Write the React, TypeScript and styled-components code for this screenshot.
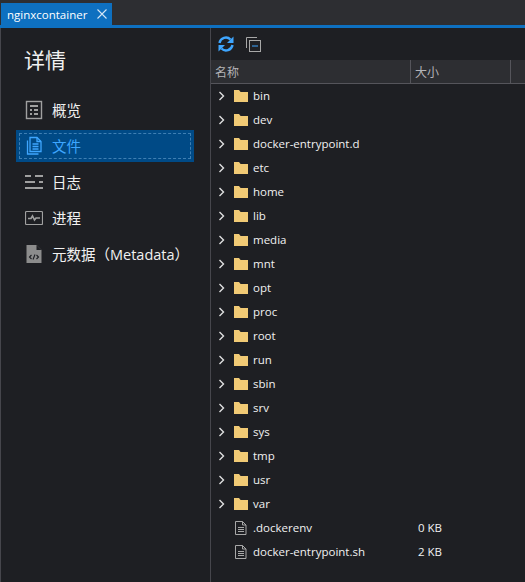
import React from 'react';
import styled, { createGlobalStyle } from 'styled-components';

const GlobalStyle = createGlobalStyle`
  html, body {
    margin: 0;
    padding: 0;
    background: #1e1f23;
  }
  * {
    box-sizing: border-box;
  }
`;

const Window = styled.div`
  width: 525px;
  height: 582px;
  display: flex;
  flex-direction: column;
  overflow: hidden;
  background: #1e1f23;
  color: #f1f1f1;
  font-family: 'Open Sans', 'Noto Sans CJK SC', sans-serif;
  font-size: 11.5px;
`;

const TabStrip = styled.div`
  height: 28px;
  flex: none;
  display: flex;
  align-items: flex-start;
  padding: 3px 0 0 1px;
  background: #2d2e32;
  box-shadow: inset 0 -3px 0 #0e70c0, inset 0 -1px 0 #46464c;
`;

const Tab = styled.div`
  width: 111px;
  height: 22px;
  display: flex;
  align-items: center;
  gap: 10px;
  padding-left: 6px;
  background: #0e70c0;
  color: #fff;
  font-size: 11.5px;
`;

const Body = styled.div`
  flex: 1;
  display: flex;
  min-height: 0;
  border-left: 1px solid #46464c;
`;

const Sidebar = styled.aside`
  width: 210px;
  flex: none;
  padding: 18px 16px 0 15px;
  border-right: 1px solid #46464c;
`;

const Title = styled.h1`
  margin: 0 0 20px 8px;
  height: 28px;
  font-size: 21px;
  line-height: 28px;
  font-weight: 400;
  color: #f1f1f1;
`;

const NavRow = styled.div<{ $active?: boolean }>`
  height: 32px;
  margin-bottom: 4px;
  width: 178px;
  display: flex;
  align-items: center;
  gap: 9px;
  padding-left: 9px;
  font-size: 14.5px;
  white-space: nowrap;
  color: ${p => (p.$active ? '#3ea6ff' : '#f1f1f1')};
  background: ${p => (p.$active ? '#004a86' : 'transparent')};
  outline: ${p => (p.$active ? '1px dashed #3f7fb3' : 'none')};
  outline-offset: -4px;
`;

const NavLabel = styled.span`
  padding-bottom: 2px;
`;

const NavIcon = styled.svg`
  width: 18px;
  height: 20px;
  flex: none;
`;

const Content = styled.main`
  flex: 1;
  min-width: 0;
  display: flex;
  flex-direction: column;
`;

const Toolbar = styled.div`
  height: 32px;
  flex: none;
  display: flex;
  align-items: center;
  gap: 11px;
  padding: 0 0 0 6px;
`;

const ColumnHeader = styled.div`
  height: 24px;
  flex: none;
  display: grid;
  grid-template-columns: 200px 100px 1fr;
  background: #2d2e32;
  border-bottom: 1px solid #55555b;
  color: #b4b4b8;
  font-size: 12px;
`;

const HeaderCell = styled.div`
  display: flex;
  align-items: center;
  padding-left: 4px;
  border-right: 1px solid #55555b;
`;

const Rows = styled.div`
  flex: 1;
`;

const Row = styled.div`
  height: 24px;
  display: grid;
  grid-template-columns: 200px 100px 1fr;
  align-items: center;
  color: #f1f1f1;
  font-size: 11.5px;
`;

const NameCell = styled.div`
  display: flex;
  align-items: center;
  padding-left: 7px;
  white-space: nowrap;
`;

const Chevron = styled.svg`
  width: 8px;
  height: 10px;
  flex: none;
  margin-right: 8px;
`;

const Spacer = styled.span`
  width: 8px;
  flex: none;
  margin-right: 8px;
`;

const FileName = styled.span`
  margin-left: 5px;
  padding-bottom: 2px;
`;

const SizeCell = styled.div`
  padding: 0 0 2px 7px;
`;

const FolderIcon = () => (
  <svg width="14" height="12" viewBox="0 0 14 12" style={{ flex: 'none' }}>
    <path d="M0 0h5l1.600 2H14v10H0z" fill="#f1ca75" />
  </svg>
);

const FileIcon = () => (
  <svg width="14" height="14" viewBox="0 0 14 14" style={{ flex: 'none' }} fill="none" stroke="#a8a8a8">
    <path d="M1.500.5h7l3.500 3.500v9.500H1.500z" />
    <path d="M8.500.5V4H12M4 6.500h6M4 8.500h6M4 10.500h6" />
  </svg>
);

const OverviewIcon = () => (
  <NavIcon viewBox="0 0 18 20" fill="none" stroke="#a0a0a0">
    <rect x="1.500" y="1.500" width="15" height="17" strokeWidth="1.400" />
    <path d="M5 6h8M5 10h2M9 10h4M5 14h2M9 14h4" strokeWidth="1.800" />
  </NavIcon>
);

const FilesIcon = () => (
  <NavIcon viewBox="0 0 18 20" fill="none" stroke="#3ea6ff" strokeWidth="1.300">
    <path d="M5 1.500h7l4 4V15.500H5z" />
    <path d="M12 1.500v4h4M2.500 4.500v13.500h11" />
    <path d="M7.500 8h6M7.500 10.500h6M7.500 13h6" />
  </NavIcon>
);

const LogsIcon = () => (
  <NavIcon viewBox="0 0 18 20" fill="none" stroke="#a0a0a0" strokeWidth="1.800">
    <path d="M0 4h6M10 4h8M0 10h10M14 10h4M0 16h18" />
  </NavIcon>
);

const ProcessIcon = () => (
  <NavIcon viewBox="0 0 18 20" fill="none" stroke="#a0a0a0">
    <rect x="0.500" y="3.500" width="17" height="13" rx="1" strokeWidth="1.200" />
    <path d="M3 10.500h3l1.500-2.500 2 4 1.500-2h4" strokeWidth="1.600" />
  </NavIcon>
);

const MetadataIcon = () => (
  <NavIcon viewBox="0 0 18 20">
    <path d="M1.500 1h10l5 5v13h-15z" fill="#8c8c8c" />
    <path d="M11.500 1v5h5" fill="#1e1f23" />
    <path d="M6.500 11l-2 2 2 2M11.500 11l2 2-2 2M10 10.500l-2 5" fill="none" stroke="#1e1f23" strokeWidth="1.100" />
  </NavIcon>
);

const navItems = [
  { label: '概览', icon: <OverviewIcon /> },
  { label: '文件', icon: <FilesIcon />, active: true },
  { label: '日志', icon: <LogsIcon /> },
  { label: '进程', icon: <ProcessIcon /> },
  { label: '元数据（Metadata）', icon: <MetadataIcon /> },
];

const folders = [
  'bin', 'dev', 'docker-entrypoint.d', 'etc', 'home', 'lib', 'media', 'mnt', 'opt',
  'proc', 'root', 'run', 'sbin', 'srv', 'sys', 'tmp', 'usr', 'var',
];

const files = [
  { name: '.dockerenv', size: '0 KB' },
  { name: 'docker-entrypoint.sh', size: '2 KB' },
];

const App: React.FC = () => {
  return (
    <Window>
      <GlobalStyle />
      <TabStrip>
        <Tab>
          nginxcontainer
          <svg width="10" height="10" viewBox="0 0 10 10" stroke="#d5e6f5" strokeWidth="1.100">
            <path d="M.5.500l9 9M9.500.500l-9 9" />
          </svg>
        </Tab>
      </TabStrip>
      <Body>
        <Sidebar>
          <Title>详情</Title>
          {navItems.map(item => (
            <NavRow key={item.label} $active={item.active}>
              {item.icon}
              <NavLabel>{item.label}</NavLabel>
            </NavRow>
          ))}
        </Sidebar>
        <Content>
          <Toolbar>
            <svg width="18" height="18" viewBox="0 0 18 18" fill="none" stroke="#3ea6ff" strokeWidth="2.400">
              <path d="M2.500 8A6.500 6.500 0 0 1 13.500 4.500" />
              <path d="M15.500 10A6.500 6.500 0 0 1 4.500 13.500" />
              <path d="M16.500 1.500V8H10z" fill="#3ea6ff" stroke="none" />
              <path d="M1.500 16.500V10H8z" fill="#3ea6ff" stroke="none" />
            </svg>
            <svg width="15" height="15" viewBox="0 0 15 15" fill="none" stroke="#a8a8a8">
              <path d="M.5 11V.5H11" />
              <rect x="3.500" y="3.500" width="11" height="11" />
              <path d="M6 9h6" stroke="#3ea6ff" />
            </svg>
          </Toolbar>
          <ColumnHeader>
            <HeaderCell>名称</HeaderCell>
            <HeaderCell>大小</HeaderCell>
          </ColumnHeader>
          <Rows>
            {folders.map(name => (
              <Row key={name}>
                <NameCell>
                  <Chevron viewBox="0 0 8 10" fill="none" stroke="#e0e0e0" strokeWidth="1.400">
                    <path d="M1.500 1l4 4-4 4" />
                  </Chevron>
                  <FolderIcon />
                  <FileName>{name}</FileName>
                </NameCell>
              </Row>
            ))}
            {files.map(file => (
              <Row key={file.name}>
                <NameCell>
                  <Spacer />
                  <FileIcon />
                  <FileName>{file.name}</FileName>
                </NameCell>
                <SizeCell>{file.size}</SizeCell>
              </Row>
            ))}
          </Rows>
        </Content>
      </Body>
    </Window>
  );
};

export default App;
